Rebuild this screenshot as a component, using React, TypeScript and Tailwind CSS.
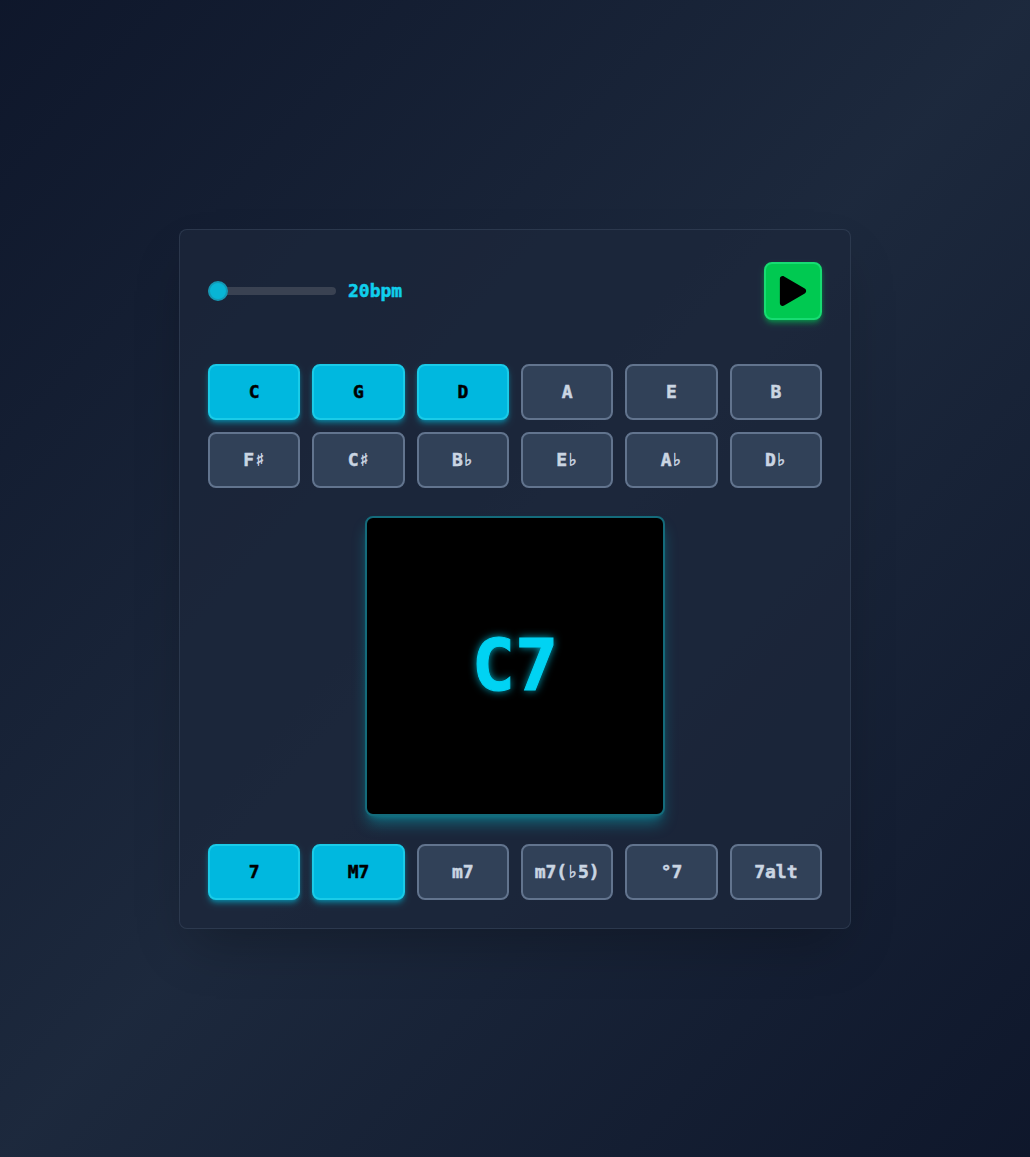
import { FaPlay } from 'react-icons/fa';

const notes = ['C', 'G', 'D', 'A', 'E', 'B', 'F♯', 'C♯', 'B♭', 'E♭', 'A♭', 'D♭'];
const chords = ['7', 'M7', 'm7', 'm7(♭5)', '°7', '7alt'];

function Toggle({ label, active }: { label: string; active: boolean }) {
  return (
    <button
      className={
        'flex h-14 items-center justify-center rounded-lg border-2 text-lg font-bold [-webkit-text-stroke:0.5px_currentColor] ' +
        (active
          ? 'border-[#1acbe8] bg-[#00b8df] text-black shadow-md shadow-cyan-500/50'
          : 'border-slate-500 bg-slate-700 text-slate-300')
      }
    >
      {label}
    </button>
  );
}

export default function App() {
  return (
    <div className="flex min-h-screen items-center justify-center bg-gradient-to-br from-slate-900 via-slate-800 to-slate-900 font-['DejaVu_Sans_Mono',monospace]">
      <div className="flex h-[700px] w-[672px] flex-col rounded-lg border border-slate-600/40 bg-[#1c273b]/75 px-7 pt-8 pb-7 shadow-2xl">
        <div className="flex items-center justify-between">
          <div className="flex items-center gap-3">
            <div className="relative h-2 w-32 rounded bg-[#3a4252]">
              <div className="absolute -top-1.5 left-0 h-5 w-5 rounded-full border-2 border-[#1498b4] bg-[#08b5d5]" />
            </div>
            <span className="text-lg font-bold text-[#10cfec] [-webkit-text-stroke:0.5px_currentColor]">20bpm</span>
          </div>
          <button className="flex h-[58px] w-[58px] items-center justify-center rounded-lg border-2 border-[#17dc72] bg-green-500 text-black shadow-md shadow-green-500/50">
            <FaPlay size={30} />
          </button>
        </div>
        <div className="mt-11 grid grid-cols-6 gap-3">
          {notes.map((n, i) => <Toggle key={n} label={n} active={i < 3} />)}
        </div>
        <div className="mt-7 flex justify-center">
          <div className="flex h-[300px] w-[300px] items-center justify-center rounded-lg border-2 border-[#146b7b] bg-black shadow-lg shadow-[#06b6c8]/45">
            <span className="relative -top-px text-7xl font-bold text-cyan-400 [-webkit-text-stroke:1px_currentColor] [text-shadow:0_0_8px_rgba(0,211,242,0.85)]">C7</span>
          </div>
        </div>
        <div className="mt-7 grid grid-cols-6 gap-3">
          {chords.map((c, i) => <Toggle key={c} label={c} active={i < 2} />)}
        </div>
      </div>
    </div>
  );
}
